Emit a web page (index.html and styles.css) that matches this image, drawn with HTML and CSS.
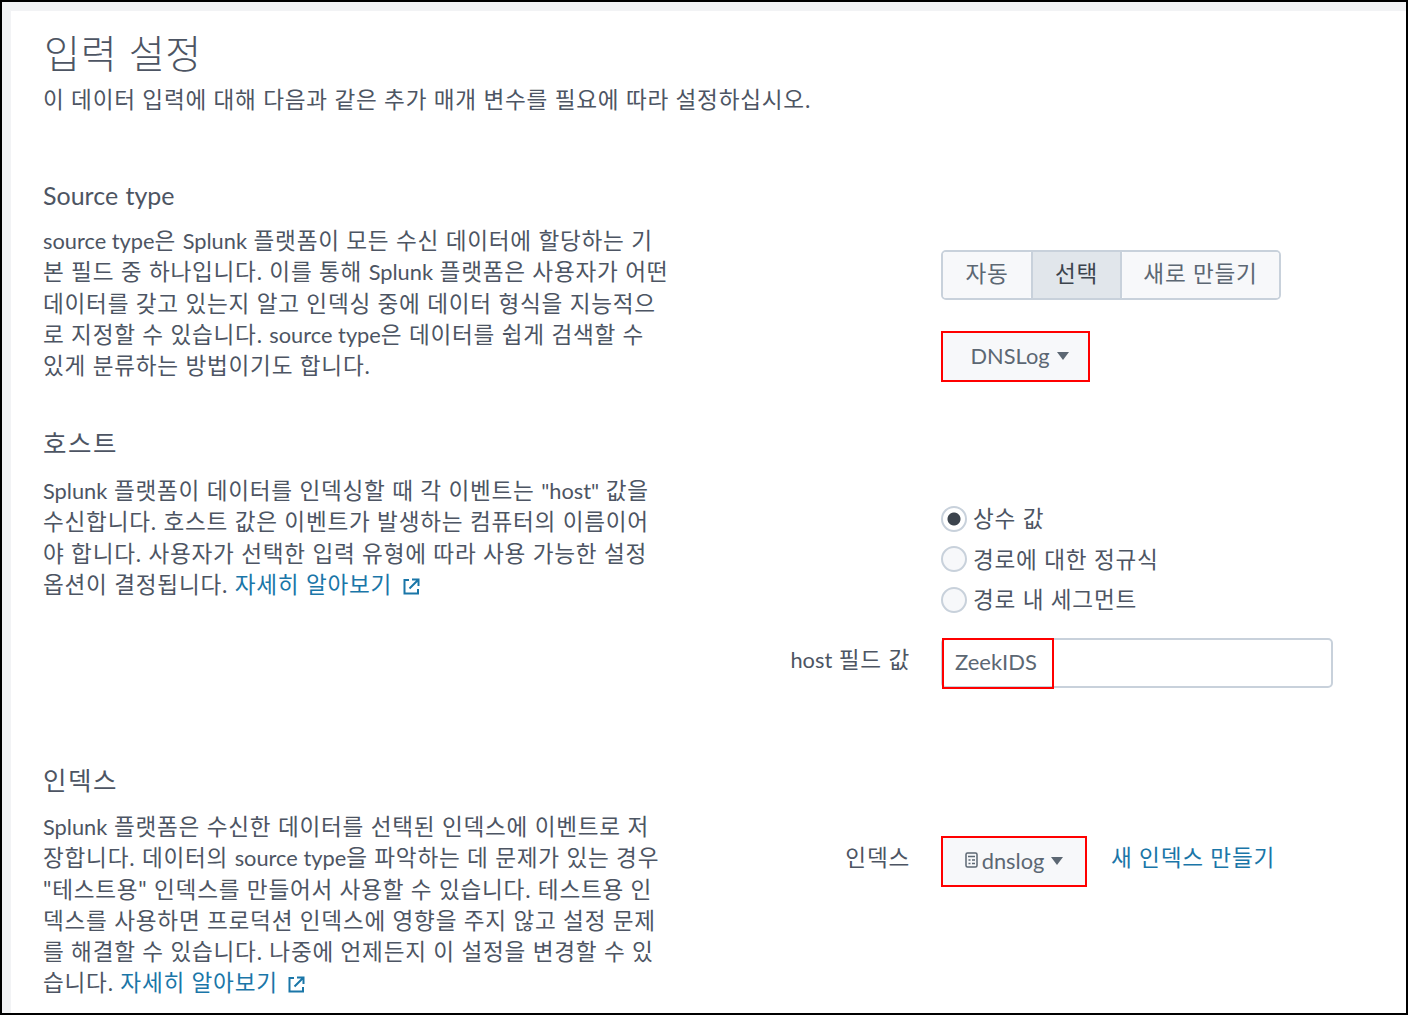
FILE: index.html
```html
<!DOCTYPE html>
<html lang="ko">
<head>
    <meta charset="UTF-8">
    <meta name="viewport" content="width=device-width, initial-scale=1.0">
    <title>입력 설정</title>
    <link rel="stylesheet" href="styles.css">
</head>
<body>
    <div class="page">
        <h1>입력 설정</h1>
        <p class="intro">이 데이터 입력에 대해 다음과 같은 추가 매개 변수를 필요에 따라 설정하십시오.</p>

        <section class="source-type">
            <h2><span class="en">Source type</span></h2>
            <div class="row">
                <p class="desc">
                    <span class="en">source type</span>은 <span class="en">Splunk</span> 플랫폼이 모든 수신 데이터에 할당하는 기<br>
                    본 필드 중 하나입니다. 이를 통해 <span class="en">Splunk</span> 플랫폼은 사용자가 어떤<br>
                    데이터를 갖고 있는지 알고 인덱싱 중에 데이터 형식을 지능적으<br>
                    로 지정할 수 있습니다. <span class="en">source type</span>은 데이터를 쉽게 검색할 수<br>
                    있게 분류하는 방법이기도 합니다.
                </p>
                <div class="controls">
                    <div class="btn-group">
                        <button class="btn">자동</button>
                        <button class="btn active">선택</button>
                        <button class="btn">새로 만들기</button>
                    </div>
                    <button class="dropdown"><span class="en">DNSLog</span><i class="caret"></i></button>
                </div>
            </div>
        </section>

        <section class="host">
            <h2>호스트</h2>
            <div class="row">
                <p class="desc">
                    <span class="en">Splunk</span> 플랫폼이 데이터를 인덱싱할 때 각 이벤트는 <span class="en">"host"</span> 값을<br>
                    수신합니다. 호스트 값은 이벤트가 발생하는 컴퓨터의 이름이어<br>
                    야 합니다. 사용자가 선택한 입력 유형에 따라 사용 가능한 설정<br>
                    옵션이 결정됩니다. <a href="#">자세히 알아보기 <svg class="external" viewBox="0 0 17 17"><path d="M6 2H1.5V15.5H15V11M9 1.5h6.5V8M15 2L6.5 10.5"/></svg></a>
                </p>
                <div class="controls">
                    <label class="radio"><i class="dot checked"></i>상수 값</label>
                    <label class="radio"><i class="dot"></i>경로에 대한 정규식</label>
                    <label class="radio"><i class="dot"></i>경로 내 세그먼트</label>
                    <div class="field">
                        <label class="name"><span class="en">host</span> 필드 값</label>
                        <div class="text-input"><span class="value en">ZeekIDS</span></div>
                    </div>
                </div>
            </div>
        </section>

        <section class="index">
            <h2>인덱스</h2>
            <div class="row">
                <p class="desc">
                    <span class="en">Splunk</span> 플랫폼은 수신한 데이터를 선택된 인덱스에 이벤트로 저<br>
                    장합니다. 데이터의 <span class="en">source type</span>을 파악하는 데 문제가 있는 경우<br>
                    "테스트용" 인덱스를 만들어서 사용할 수 있습니다. 테스트용 인<br>
                    덱스를 사용하면 프로덕션 인덱스에 영향을 주지 않고 설정 문제<br>
                    를 해결할 수 있습니다. 나중에 언제든지 이 설정을 변경할 수 있<br>
                    습니다. <a href="#">자세히 알아보기 <svg class="external" viewBox="0 0 17 17"><path d="M6 2H1.5V15.5H15V11M9 1.5h6.5V8M15 2L6.5 10.5"/></svg></a>
                </p>
                <div class="controls">
                    <div class="field">
                        <label class="name">인덱스</label>
                        <button class="dropdown small">
                            <svg class="doc" viewBox="0 0 13 16"><rect x="1" y="1" width="11" height="14" rx="1.5"/><path d="M3 4.5h7M3.5 8h2M7 8h3M3.5 11.5h2M7 11.5h3"/></svg>
                            <span class="en">dnslog</span><i class="caret"></i>
                        </button>
                        <a class="new-index" href="#">새 인덱스 만들기</a>
                    </div>
                </div>
            </div>
        </section>
    </div>
</body>
</html>
```

FILE: styles.css
```css
* {
    box-sizing: border-box;
}
body {
    margin: 0;
    height: 1015px;
    overflow: hidden;
    border: 2px solid #000;
    background-color: #f2f3f5;
    padding: 9px 0 0 9px;
    font-family: Lato, "Noto Sans CJK KR", sans-serif;
    font-size: 22.6px;
    line-height: 31.2px;
    letter-spacing: 0.77px;
    color: #4d5563;
    white-space: nowrap;
}
.page {
    height: 1002px;
    background-color: #fff;
    padding: 13px 0 0 32px;
}
h1, h2, p {
    margin: 0;
    font-weight: 400;
}
h1 {
    height: 60px;
    padding: 0 0 0 1px;
    font-size: 39px;
    font-weight: 300;
    line-height: 58px;
}
.en {
    font-size: 21.8px;
    letter-spacing: 0;
}
h2 {
    font-size: 25.5px;
    line-height: 34px;
    letter-spacing: 1.5px;
}
h2 .en {
    display: block;
    margin-top: -1px;
    margin-bottom: 1px;
    font-size: 25px;
    word-spacing: 1px;
}
a {
    color: #1a76a8;
    text-decoration: none;
}
.row {
    display: grid;
    grid-template-columns: 898px 1fr;
}
.source-type {
    height: 248px;
    margin-top: 64px;
}
.source-type .desc {
    padding-top: 12px;
}
.source-type .controls {
    padding-top: 37px;
}
.host {
    height: 337px;
}
.host .desc {
    padding-top: 15px;
}
.host .controls {
    padding-top: 38px;
}
.index .desc {
    padding-top: 14px;
}
.index .controls {
    padding-top: 39px;
}
.btn-group {
    display: flex;
    width: 340px;
    height: 50px;
    border: 2px solid #c8d1db;
    border-radius: 5px;
}
.btn, .dropdown {
    border: none;
    background-color: #f7f8fa;
    font: inherit;
    letter-spacing: inherit;
    color: #5c6773;
    padding: 0;
}
.btn {
    width: 88px;
    padding-bottom: 4px;
    border-radius: 3px;
}
.btn.active {
    width: 91px;
    border-radius: 0;
    border-left: 2px solid #c8d1db;
    border-right: 2px solid #c8d1db;
    background-color: #e1e6eb;
    color: #3c444d;
}
.btn:last-child {
    flex: 1;
}
.dropdown {
    display: flex;
    align-items: center;
    justify-content: center;
    width: 149px;
    height: 51px;
    margin-top: 31px;
    padding: 0 0 3px 8px;
    border: 2px solid #f00;
}
.caret {
    margin: 2px 0 0 7px;
    border: 6px solid transparent;
    border-top: 8px solid #5c6773;
    border-bottom: none;
}
.radio {
    display: flex;
    align-items: center;
    height: 40.7px;
}
.dot {
    width: 26px;
    height: 26px;
    margin-right: 6px;
    border: 2px solid #c8d1db;
    border-radius: 50%;
    background-color: #f7f8fa;
}
.dot.checked {
    background: radial-gradient(circle, #3c444d 6px, #fff 7px);
}
.field {
    display: flex;
    margin-left: -200px;
}
.name {
    width: 169px;
    margin-right: 31px;
    text-align: right;
}
.host .field {
    margin-top: 18px;
}
.host .name {
    padding-top: 6px;
}
.index .name, .new-index {
    padding-top: 6px;
}
.text-input {
    width: 392px;
    height: 50px;
    border: 2px solid #c8d1db;
    border-radius: 5px;
}
.value {
    display: block;
    width: 112px;
    height: 51px;
    margin: -2px 0 0 -1px;
    padding: 6px 0 0 11px;
    border: 2px solid #f00;
    font-size: 22px;
    color: #5c6773;
}
.dropdown.small {
    width: 146px;
    margin-top: 0;
    padding-left: 0;
}
.new-index {
    margin-left: 24px;
}
.doc {
    width: 13px;
    height: 16px;
    margin-right: 4px;
    fill: none;
    stroke: #5c6773;
    stroke-width: 1.5;
}
.external {
    width: 17px;
    height: 17px;
    margin-left: 4px;
    vertical-align: -2px;
    fill: none;
    stroke: #1a76a8;
    stroke-width: 2;
}
```
